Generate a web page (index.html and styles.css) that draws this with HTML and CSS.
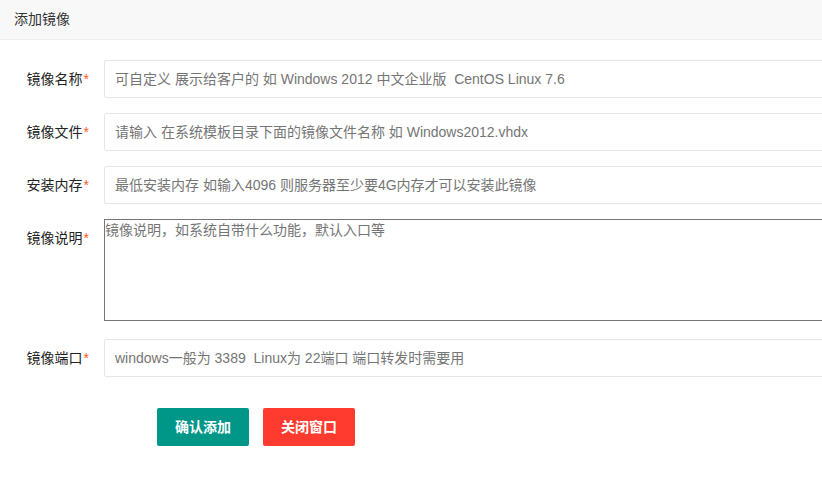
FILE: index.html
```html
<!DOCTYPE html>
<html lang="zh-CN">
<head>
<meta charset="utf-8">
<title>添加镜像</title>
<link rel="stylesheet" href="styles.css">
</head>
<body>
<div class="layer">
  <div class="layer-title">添加镜像</div>
  <form class="form">
    <div class="form-item">
      <label class="form-label">镜像名称<span class="req">*</span></label>
      <input class="input" type="text" placeholder="可自定义 展示给客户的 如 Windows 2012 中文企业版  CentOS Linux 7.6">
    </div>
    <div class="form-item">
      <label class="form-label">镜像文件<span class="req">*</span></label>
      <input class="input" type="text" placeholder="请输入 在系统模板目录下面的镜像文件名称 如 Windows2012.vhdx">
    </div>
    <div class="form-item">
      <label class="form-label">安装内存<span class="req">*</span></label>
      <input class="input" type="text" placeholder="最低安装内存 如输入4096 则服务器至少要4G内存才可以安装此镜像">
    </div>
    <div class="form-item form-item-text">
      <label class="form-label">镜像说明<span class="req">*</span></label>
      <textarea class="textarea" placeholder="镜像说明，如系统自带什么功能，默认入口等"></textarea>
    </div>
    <div class="form-item">
      <label class="form-label">镜像端口<span class="req">*</span></label>
      <input class="input" type="text" placeholder="windows一般为 3389  Linux为 22端口 端口转发时需要用">
    </div>
    <div class="form-actions">
      <button type="button" class="btn btn-primary">确认添加</button>
      <button type="button" class="btn btn-danger">关闭窗口</button>
    </div>
  </form>
</div>
</body>
</html>
```

FILE: styles.css
```css
html, body {
  margin: 0;
  padding: 0;
  background: #fff;
}
body {
  font-family: "Liberation Sans", "Noto Sans CJK SC", sans-serif;
  font-size: 14px;
  color: #333;
  overflow: hidden;
}
.layer {
  width: 822px;
  overflow: hidden;
}
.layer-title {
  height: 39px;
  line-height: 39px;
  padding-left: 14px;
  background: #f8f8f8;
  border-bottom: 1px solid #eee;
  color: #333;
  font-size: 14px;
}
.form {
  margin: 0;
  padding-top: 20px;
}
.form-item {
  display: flex;
  align-items: flex-start;
  margin-bottom: 15px;
  overflow: hidden;
}
.form-item-text {
  margin-bottom: 18px;
}
.form-label {
  flex: 0 0 auto;
  width: 89px;
  box-sizing: border-box;
  padding: 9px 0 9px 0;
  margin-right: 15px;
  line-height: 20px;
  text-align: right;
  color: #222;
  font-size: 14px;
}
.req {
  color: #ff5722;
  margin-left: 1px;
}
.input {
  flex: 0 0 auto;
  display: block;
  width: 760px;
  height: 38px;
  box-sizing: border-box;
  margin: 0;
  padding: 0 10px;
  border: 1px solid #e6e6e6;
  border-radius: 2px;
  background: #fff;
  font-family: "Liberation Sans", "Noto Sans CJK SC", sans-serif;
  font-size: 14px;
  line-height: 36px;
  color: #333;
  outline: none;
}
.input::placeholder,
.textarea::placeholder {
  color: #757575;
  opacity: 1;
}
.textarea {
  flex: 0 0 auto;
  display: block;
  width: 760px;
  height: 102px;
  box-sizing: border-box;
  margin: 0;
  padding: 0;
  border: 1px solid #767676;
  border-radius: 0;
  font-family: "Liberation Sans", "Noto Sans CJK SC", sans-serif;
  font-size: 14px;
  line-height: 20px;
  resize: none;
  outline: none;
}
.form-actions {
  padding-left: 157px;
  padding-top: 16px;
  display: flex;
  gap: 14px;
}
.btn {
  height: 38px;
  padding: 0 18px;
  border: none;
  border-radius: 2px;
  color: #fff;
  font-family: "Liberation Sans", "Noto Sans CJK SC", sans-serif;
  font-size: 14px;
  font-weight: bold;
  line-height: 38px;
  cursor: pointer;
}
.btn-primary {
  background: #009688;
}
.btn-danger {
  background: #ff3a2f;
}
```
